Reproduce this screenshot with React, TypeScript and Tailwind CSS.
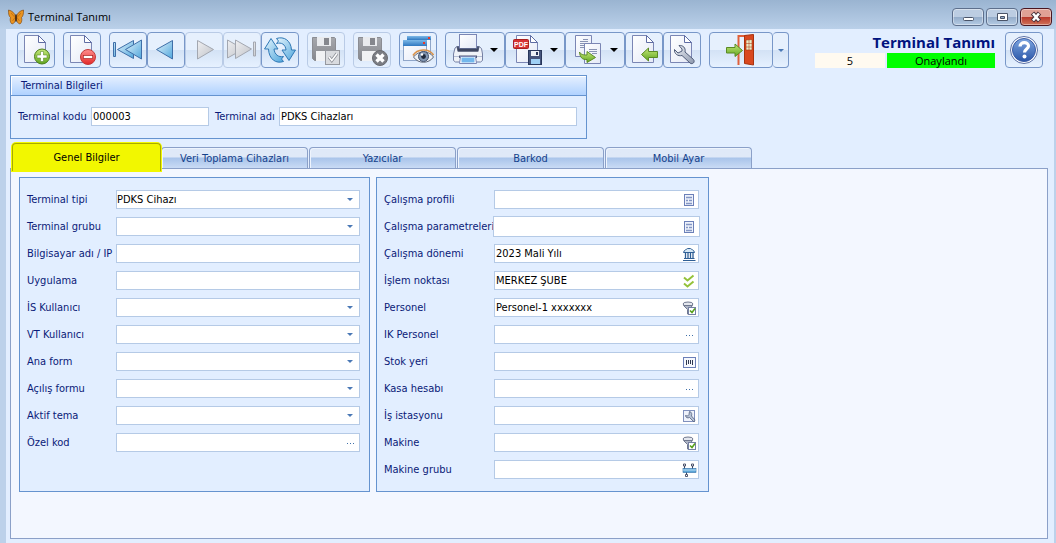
import type { ReactNode } from "react";
import clsx from "clsx";

type FieldKind = "text" | "select" | "dots" | "form" | "bank" | "checks" | "filter" | "barcode" | "wrench" | "group";

type Field = {
  id: string;
  label: string;
  kind: FieldKind;
  value?: string;
  focused?: boolean;
};

const leftFields: Field[] = [
  { id: "terminal-tipi", label: "Terminal tipi", kind: "select", value: "PDKS Cihazı" },
  { id: "terminal-grubu", label: "Terminal grubu", kind: "select" },
  { id: "bilgisayar-adi", label: "Bilgisayar adı / IP", kind: "text" },
  { id: "uygulama", label: "Uygulama", kind: "text" },
  { id: "is-kullanici", label: "İS Kullanıcı", kind: "select" },
  { id: "vt-kullanici", label: "VT Kullanıcı", kind: "select" },
  { id: "ana-form", label: "Ana form", kind: "select" },
  { id: "acilis-formu", label: "Açılış formu", kind: "select" },
  { id: "aktif-tema", label: "Aktif tema", kind: "select" },
  { id: "ozel-kod", label: "Özel kod", kind: "dots" },
];

const rightFields: Field[] = [
  { id: "calisma-profili", label: "Çalışma profili", kind: "form" },
  { id: "calisma-parametreleri", label: "Çalışma parametreleri", kind: "form", focused: true },
  { id: "calisma-donemi", label: "Çalışma dönemi", kind: "bank", value: "2023 Mali Yılı" },
  { id: "islem-noktasi", label: "İşlem noktası", kind: "checks", value: "MERKEZ ŞUBE" },
  { id: "personel", label: "Personel", kind: "filter", value: "Personel-1 xxxxxxx" },
  { id: "ik-personel", label: "IK Personel", kind: "dots" },
  { id: "stok-yeri", label: "Stok yeri", kind: "barcode" },
  { id: "kasa-hesabi", label: "Kasa hesabı", kind: "dots" },
  { id: "is-istasyonu", label: "İş istasyonu", kind: "wrench" },
  { id: "makine", label: "Makine", kind: "filter" },
  { id: "makine-grubu", label: "Makine grubu", kind: "group" },
];

const tabs = ["Genel Bilgiler", "Veri Toplama Cihazları", "Yazıcılar", "Barkod", "Mobil Ayar"];

// gradients shared by the toolbar icons
function IconDefs() {
  return (
    <svg className="absolute h-0 w-0" aria-hidden="true">
      <defs>
        <linearGradient id="g-page" x1="0" y1="0" x2="1" y2="1">
          <stop offset="0" stopColor="#ffffff" />
          <stop offset="1" stopColor="#e4e9f6" />
        </linearGradient>
        <linearGradient id="g-blue" x1="0" y1="0" x2="1" y2="1">
          <stop offset="0" stopColor="#e6f5fd" />
          <stop offset="1" stopColor="#4fa6dc" />
        </linearGradient>
        <linearGradient id="g-grey" x1="0" y1="0" x2="1" y2="1">
          <stop offset="0" stopColor="#f0f0f2" />
          <stop offset="1" stopColor="#bfc2c8" />
        </linearGradient>
        <linearGradient id="g-green" x1="0" y1="0" x2="0" y2="1">
          <stop offset="0" stopColor="#c6e87a" />
          <stop offset="1" stopColor="#5fa51e" />
        </linearGradient>
        <linearGradient id="g-red" x1="0" y1="0" x2="0" y2="1">
          <stop offset="0" stopColor="#ff8f8f" />
          <stop offset="1" stopColor="#e32828" />
        </linearGradient>
        <linearGradient id="g-disk" x1="0" y1="0" x2="0" y2="1">
          <stop offset="0" stopColor="#a6a8ad" />
          <stop offset="1" stopColor="#85878d" />
        </linearGradient>
        <linearGradient id="g-bar" x1="0" y1="0" x2="0" y2="1">
          <stop offset="0" stopColor="#7db9e8" />
          <stop offset="1" stopColor="#2f78c0" />
        </linearGradient>
        <linearGradient id="g-help" x1="0" y1="0" x2="0" y2="1">
          <stop offset="0" stopColor="#7fa6e0" />
          <stop offset="1" stopColor="#2a56a8" />
        </linearGradient>
        <linearGradient id="g-metal" x1="0" y1="0" x2="1" y2="1">
          <stop offset="0" stopColor="#eef1f6" />
          <stop offset="1" stopColor="#8d98ae" />
        </linearGradient>
      </defs>
    </svg>
  );
}

function Icon({ children }: { children: ReactNode }) {
  return (
    <svg className="h-8 w-8 shrink-0" viewBox="0 0 32 32" aria-hidden="true">
      {children}
    </svg>
  );
}

function Page() {
  return (
    <>
      <path d="M4.5 1.5H18.5L25.5 8.5V28.5H4.5Z" fill="url(#g-page)" stroke="#7b86b4" />
      <path d="M18.5 1.5V8.5H25.5Z" fill="#fff" stroke="#5f6ca3" strokeLinejoin="round" />
    </>
  );
}

function NewIcon() {
  return (
    <Icon>
      <Page />
      <circle cx="22" cy="22.5" r="7.5" fill="url(#g-green)" stroke="#4d7f1c" />
      <path d="M20.500 17.500h3v3.500h3.500v3h-3.500v3.500h-3v-3.500h-3.500v-3h3.500Z" fill="#fff" stroke="#4d7f1c" strokeWidth=".5" />
    </Icon>
  );
}

function DeleteIcon() {
  return (
    <Icon>
      <Page />
      <circle cx="22" cy="23" r="7.5" fill="url(#g-red)" stroke="#c23a3a" />
      <rect x="17.3" y="21.4" width="9.4" height="3.2" fill="#fff" stroke="#a82020" strokeWidth=".7" />
    </Icon>
  );
}

function FirstIcon() {
  return (
    <Icon>
      <g fill="url(#g-blue)" stroke="#3f6fa8" strokeLinejoin="round">
        <path d="M1.500 8.500h2v14h-2Z" />
        <path d="M5.500 15.500 21.500 6.500v18Z" />
        <path d="M13.500 15.500 29.500 6v19Z" />
      </g>
    </Icon>
  );
}

function PrevIcon() {
  return (
    <Icon>
      <path d="M6.500 15.500 22.500 6.500v18.500Z" fill="url(#g-blue)" stroke="#3f6fa8" strokeLinejoin="round" />
    </Icon>
  );
}

function NextIcon() {
  return (
    <Icon>
      <path d="M25.500 15.500 9.500 6.500v18.500Z" fill="url(#g-grey)" stroke="#a3a7b0" strokeLinejoin="round" />
    </Icon>
  );
}

function LastIcon() {
  return (
    <Icon>
      <g fill="url(#g-grey)" stroke="#a3a7b0" strokeLinejoin="round">
        <path d="M17.500 15 1.500 6v18Z" />
        <path d="M25.500 15 9.500 6v18.500Z" />
        <path d="M27.500 8h2v14h-2Z" />
      </g>
    </Icon>
  );
}

function RefreshIcon() {
  return (
    <Icon>
      <g fill="url(#g-blue)" stroke="#2f78b5" strokeLinejoin="round">
        <path d="M12.500 4.500C20 2 27 6.500 27.500 16H31.500L25 26.500 18 16h4C21.500 10.500 17.500 8 12.500 9.500L14.500 7Z" />
        <path d="M19.500 27.500C12 30 5 25.500 4.500 15H.5L7 4.500 14 15H10C10.500 20.500 14.500 23.500 19.500 22.500L17.500 25Z" />
      </g>
    </Icon>
  );
}

function GreyDisk() {
  return (
    <>
      <path d="M2.500 3.500H24.500L25.500 4.500V26.500H4.500L2.500 24.500Z" fill="url(#g-disk)" stroke="#8b8d93" />
      <rect x="7" y="3" width="14" height="9" fill="#e9ebee" />
      <rect x="14" y="4" width="5" height="7" fill="#85878d" />
      <rect x="6" y="17" width="16" height="10" fill="#f1f2f4" />
    </>
  );
}

function SaveCheckIcon() {
  return (
    <Icon>
      <GreyDisk />
      <rect x="15.500" y="16.500" width="14" height="14" fill="#d9dbdf" stroke="#95989f" />
      <path d="m19 23 2.800 3.500L27 19.500" fill="none" stroke="#8b8e95" strokeWidth="3" />
      <path d="m19 23 2.800 3.500L27 19.500" fill="none" stroke="#fff" strokeWidth="1.500" />
    </Icon>
  );
}

function SaveCloseIcon() {
  return (
    <Icon>
      <GreyDisk />
      <circle cx="24" cy="24" r="7.500" fill="#7b7d83" stroke="#696b70" />
      <path d="m20.500 20.500 7 7m0-7-7 7" stroke="#fff" strokeWidth="3.400" />
    </Icon>
  );
}

function PreviewIcon() {
  return (
    <Icon>
      <rect x="5.500" y="2.500" width="23" height="18" fill="#f4f8fd" stroke="#8fa6c9" />
      <rect x="5" y="2" width="24" height="4" fill="url(#g-bar)" />
      <rect x="26" y="3" width="2" height="2" fill="#e8392b" />
      <rect x="1.500" y="6.500" width="23" height="20" fill="url(#g-page)" stroke="#8fa6c9" />
      <rect x="1" y="6" width="24" height="6" fill="url(#g-bar)" />
      <rect x="21" y="8" width="2" height="2" fill="#e8392b" />
      <path d="M11.500 23C16 16.500 27 16 31.500 23 27 30 16 30 11.500 23Z" fill="#eef2f7" stroke="#5f6675" />
      <path d="M11 21.500C15 14.500 27 14 31.500 21" fill="none" stroke="#d9924a" strokeWidth="1.600" />
      <circle cx="21.500" cy="22.500" r="5" fill="#8297b3" stroke="#41516c" />
      <circle cx="21.500" cy="22.500" r="2.400" fill="#1f2a3d" />
      <circle cx="20" cy="20.500" r="1.200" fill="#fff" />
    </Icon>
  );
}

function PrintIcon() {
  return (
    <Icon>
      <path d="M3 14 5 12.500H27L29.500 14.500 30.500 20V26.500L28.500 28H3.500L1.500 26.500V20Z" fill="#eff2f8" stroke="#7580a3" />
      <path d="M4.500 12.500H27.500L26.500 17.500H5.500Z" fill="#4d5674" />
      <rect x="7.500" y=".5" width="17" height="14" fill="url(#g-page)" stroke="#7b86b4" />
      <path d="M6 14.500H26V17.500H6Z" fill="#3e4660" />
      <path d="M2 22.500H30" stroke="#b5bed4" />
      <path d="M7 21.500H25V24H7Z" fill="#4d5674" />
      <path d="M8.500 22.500H23.500L24.500 29.500H7.500Z" fill="#fff" stroke="#7b86b4" />
      <path d="M9.500 23.500H22.500V28.500H9.500Z" fill="#72b7ec" />
    </Icon>
  );
}

function PdfIcon() {
  return (
    <Icon>
      <Page />
      <rect x="1.500" y="5.500" width="15" height="9" rx="1" fill="#d63333" stroke="#a81f1f" />
      <text x="9" y="13" textAnchor="middle" fontSize="7" fontWeight="700" fontFamily="Liberation Sans, sans-serif" fill="#fff">
        PDF
      </text>
      <rect x="16.500" y="16.500" width="13" height="14" fill="#46557c" stroke="#28365a" />
      <rect x="19" y="17" width="8" height="5" fill="#edf1f7" />
      <rect x="24" y="18" width="2" height="3" fill="#28365a" />
      <rect x="19" y="25" width="9" height="5" fill="#9fd0f5" />
    </Icon>
  );
}

function CopyIcon() {
  return (
    <Icon>
      <path d="M3.500 1.500H19.500V22.500H3.500Z" fill="url(#g-page)" stroke="#7b86b4" />
      <path d="M11 5.500H16M8 7.500H16M8 9.500H16M8 11.500H12M8 13.500H12" stroke="#8993b3" />
      <path d="M12.500 9.500H28.500V29.500H12.500Z" fill="url(#g-page)" stroke="#7b86b4" />
      <path d="M17 15.500H25M17 17.500H25M20 19.500H25" stroke="#8993b3" />
      <path d="M7.500 18C9 21 12 21 15 21V17.500L23.500 23.500 15 28.500V25.500C10 26 8 23 7.500 18Z" fill="url(#g-green)" stroke="#5a8a24" strokeLinejoin="round" />
    </Icon>
  );
}

function ImportIcon() {
  return (
    <Icon>
      <Page />
      <path d="M13.500 20.500 20.500 14V17.500H29.500V23.500H20.500V27Z" fill="url(#g-green)" stroke="#5a8a24" strokeLinejoin="round" />
    </Icon>
  );
}

function WrenchIcon() {
  return (
    <Icon>
      <Page />
      <path
        d="M13 11.500C17 11 20 14 19 18L27.500 25.500C29.500 28 26.500 31 24 29L16 21.500C12 22.500 8 20 8.500 15.500L12 19 16 17 16 15Z"
        fill="url(#g-metal)"
        stroke="#4f5b78"
        strokeLinejoin="round"
      />
    </Icon>
  );
}

function ExitIcon() {
  return (
    <Icon>
      <path d="M13.500 31V2H22" fill="none" stroke="#e0603a" strokeWidth="2" />
      <path d="M19.500 1.500 28.500.5V31L19.500 29.500Z" fill="#d9481f" stroke="#a8330f" />
      <path d="M21 6 27 5.500V16H21Z" fill="#e9ecc6" stroke="#a8330f" strokeWidth=".6" />
      <path d="M24 5.500V16M21 9.500H27M21 13H27" stroke="#a8330f" strokeWidth=".5" />
      <path d="M1.500 13.500H10V10L17.500 16.500 10 22.500V19H1.500Z" fill="url(#g-green)" stroke="#5a8a24" strokeLinejoin="round" />
    </Icon>
  );
}

function HelpIcon() {
  return (
    <Icon>
      <circle cx="16" cy="16" r="13.500" fill="#fff" stroke="#5a6fa5" />
      <circle cx="16" cy="16" r="11.500" fill="url(#g-help)" stroke="#3a5ba6" />
      <path d="M12 12.500C12 7.500 20.500 7.500 20.500 12 20.500 15 16.500 15 16.500 18.500" fill="none" stroke="#fff" strokeWidth="3.200" />
      <circle cx="16.500" cy="22.500" r="2" fill="#fff" />
    </Icon>
  );
}

function Butterfly() {
  return (
    <svg className="h-4 w-4" viewBox="0 0 16 16" aria-hidden="true">
      <g fill="#ea9420" stroke="#7a420c" strokeWidth=".6" strokeLinejoin="round">
        <path d="M7.500 7.500C7 4.500 4 1.500 .5 1 .2 4.500 1 7.500 2.500 8.500 1.800 10.500 2 13.500 4 15 6.500 14.500 7.500 12 7.500 10Z" />
        <path d="M8.500 7.500C9 4.500 12 1.500 15.500 1 15.800 4.500 15 7.500 13.500 8.500 14.200 10.500 14 13.500 12 15 9.500 14.500 8.500 12 8.500 10Z" />
      </g>
      <path d="M3 4 7 8.500 4.500 12M13 4 9 8.500l2.500 3.500" fill="none" stroke="#b5640f" strokeWidth=".7" />
      <path d="M8 5.500V12.500" stroke="#3a1d05" strokeWidth="1.400" />
    </svg>
  );
}

function Arrow({ className }: { className: string }) {
  return (
    <svg className={className} viewBox="0 0 8 4" aria-hidden="true">
      <path d="M0 0H8L4 4Z" fill="currentColor" />
    </svg>
  );
}

function FieldIcon({ kind }: { kind: FieldKind }) {
  return (
    <svg className="h-4 w-4" viewBox="0 0 16 16" aria-hidden="true">
      {kind === "dots" && <path d="M5 8h1v1H5ZM8 8h1v1H8ZM11 8h1v1h-1Z" fill="#3f6fa8" />}
      {kind === "form" && (
        <>
          <rect x="3.500" y="2.500" width="9" height="11" fill="#eef2fb" stroke="#6c80b8" />
          <path d="M5 5.500h6M5 8.500h2M8 8.500h3M5 11.500h6" stroke="#8496c4" strokeWidth="1.500" />
        </>
      )}
      {kind === "bank" && (
        <>
          <path d="M2.500 6.500C3 3.500 6 3.500 6.500 2.500H9.500C10 3.500 13 3.500 13.500 6.500Z" fill="#d7e8f5" stroke="#2f5f95" />
          <path d="M4.500 7v6M7 7v6M9.500 7v6M12 7v6" stroke="#2f5f95" strokeWidth="1.300" />
          <path d="M3 12.500H13.500M2 14.500H14.500" stroke="#2f5f95" />
        </>
      )}
      {kind === "checks" && (
        <path d="m3 4.500 3.500 3L12.500 2.500M3 10.500l3.500 3L12.500 8.500" fill="none" stroke="#94c23a" strokeWidth="2" />
      )}
      {kind === "filter" && (
        <>
          <ellipse cx="7" cy="4" rx="5" ry="2" fill="#e4e7ee" stroke="#70788f" />
          <path d="M2.500 5.500 6.500 9.500V14H8V9.500L11.500 5.500Z" fill="#aeb5c5" stroke="#70788f" />
          <rect x="7.500" y="7.500" width="7" height="7" fill="#fff" stroke="#7580a3" />
          <path d="m9 10.500 2 2 3-4" fill="none" stroke="#57a01c" strokeWidth="1.600" />
        </>
      )}
      {kind === "barcode" && (
        <>
          <rect x="2.500" y="3.500" width="12" height="10" fill="#f6f8fd" stroke="#6c80b8" />
          <path d="M5.500 6v5M7.500 6v4M9.500 6v4M11.500 6v5" stroke="#2f3850" />
        </>
      )}
      {kind === "wrench" && (
        <>
          <rect x="2.500" y="2.500" width="11" height="11" fill="#eef2fb" stroke="#8090bd" />
          <path d="M8.500 3.500C11 4 11 6.500 10.500 8L14 12 13 14 8.500 9.500C6.500 10.500 4.500 9.500 4.500 7.500L6.500 8 8 6.500Z" fill="#b4c0d4" stroke="#56627f" strokeWidth=".8" />
        </>
      )}
      {kind === "group" && (
        <>
          <path d="M3.500 3V7M11.500 3V7M5.500 10V14" stroke="#3d4560" />
          <rect x="2" y="6.500" width="13" height="4" fill="#5ca6d8" stroke="#2f6ea8" strokeWidth=".6" />
          <path d="M2 8H15" stroke="#bfe0f5" />
          <path d="M2.500 2h2v2h-2ZM10.500 2h2v2h-2ZM4.500 12.500h2v2h-2Z" fill="#fff" stroke="#3d4560" strokeWidth=".9" />
        </>
      )}
    </svg>
  );
}

const toolButton =
  "flex h-9 items-center justify-center rounded-sm border bg-linear-to-b from-[#e6f0fd] from-50% via-[#d3e2f5] via-50% to-[#e6f1ff]";

function ToolButton({
  label,
  children,
  wide,
  disabled,
}: {
  label: string;
  children: ReactNode;
  wide?: boolean;
  disabled?: boolean;
}) {
  return (
    <button
      type="button"
      aria-label={label}
      disabled={disabled}
      className={clsx(toolButton, wide ? "w-[60px] gap-1.5" : "w-[38px]", disabled ? "border-[#b9cbe6]" : "border-[#7897c8]")}
    >
      {children}
      {wide && <Arrow className="h-1 w-2 text-black" />}
    </button>
  );
}

function WindowButton({ label, close, children }: { label: string; close?: boolean; children: ReactNode }) {
  return (
    <button
      type="button"
      aria-label={label}
      className={clsx(
        "flex h-[18px] w-8 items-center justify-center rounded-sm border shadow-[inset_0_0_0_1px_rgba(255,255,255,0.4)] bg-linear-to-b from-50% via-50%",
        close
          ? "border-[#4a1620] from-[#e0a195] via-[#b8372a] to-[#cf7158]"
          : "border-[#5d6f8c] from-[#bccde2] via-[#94acc9] to-[#b4cbe4]",
      )}
    >
      <svg className="h-3 w-4" viewBox="0 0 16 12" aria-hidden="true">
        {children}
      </svg>
    </button>
  );
}

function FieldRow({ field }: { field: Field }) {
  const { id, label, kind, value, focused } = field;

  return (
    <>
      <label htmlFor={id} className="whitespace-nowrap">
        {label}
      </label>
      <div className={clsx("flex h-[19px] min-w-0 items-center border bg-white", focused ? "border-white ring-1 ring-[#b5cae6]" : "border-[#b5cae6]")}>
        {kind === "select" ? (
          <div className="relative h-full w-full">
            <select id={id} defaultValue={value ?? ""} className="block h-full w-full appearance-none bg-transparent text-black outline-none">
              <option value={value ?? ""}>{value ?? ""}</option>
            </select>
            <Arrow className="pointer-events-none absolute right-1.5 top-[7px] h-[3px] w-1.5 text-[#4a78b5]" />
          </div>
        ) : (
          <>
            <input id={id} type="text" defaultValue={value ?? ""} className="h-full min-w-0 flex-1 bg-transparent pl-px text-black outline-none" />
            {kind !== "text" && (
              <button type="button" aria-label={`${label} seç`} className="mr-px">
                <FieldIcon kind={kind} />
              </button>
            )}
          </>
        )}
      </div>
    </>
  );
}

export default function App() {
  return (
    <div className="flex min-h-screen flex-col bg-[#bcd1ea] font-['DejaVu_Sans_Condensed','DejaVu_Sans',sans-serif] text-[11px] leading-4 text-[#0a1a78]">
      <IconDefs />

      <header className="flex h-[29px] items-center bg-linear-to-b from-[#9ab4d1] to-[#bad0e9] pl-2 pr-1 pt-1">
        <Butterfly />
        <span className="ml-1 flex-1 font-['Open_Sans',sans-serif] text-[11px] text-black">Terminal Tanımı</span>
        <div className="flex gap-0.5">
          <WindowButton label="Simge durumuna küçült">
            <rect x="3.500" y="6.500" width="10" height="3" rx="1" fill="#fff" stroke="#4a5468" />
          </WindowButton>
          <WindowButton label="Ekranı kapla">
            <path d="M3.500 2.500H13.500V9.500H3.500ZM6.500 5.500H10.500V7.500H6.500Z" fill="#fff" fillRule="evenodd" stroke="#4a5468" />
          </WindowButton>
          <WindowButton label="Kapat" close>
            <path d="m4.500 2 7 8m0-8-7 8" stroke="#4a3038" strokeWidth="4.500" />
            <path d="m5 2.500 6 7m0-7-6 7" stroke="#fff" strokeWidth="2.600" />
          </WindowButton>
        </div>
      </header>

      <main className="ml-1.5 mr-0.5 flex flex-1 flex-col bg-[#e2eeff] pb-1 pl-1 pr-1.5">
        <div className="flex items-start pl-[7px] pr-[5px] pt-[3px]">
          <div className="flex gap-2">
            <ToolButton label="Yeni"><NewIcon /></ToolButton>
            <ToolButton label="Sil"><DeleteIcon /></ToolButton>
            <div className="flex">
              <ToolButton label="İlk kayıt"><FirstIcon /></ToolButton>
              <ToolButton label="Önceki kayıt"><PrevIcon /></ToolButton>
              <ToolButton label="Sonraki kayıt" disabled><NextIcon /></ToolButton>
              <ToolButton label="Son kayıt" disabled><LastIcon /></ToolButton>
              <ToolButton label="Yenile"><RefreshIcon /></ToolButton>
            </div>
            <ToolButton label="Kaydet" disabled><SaveCheckIcon /></ToolButton>
            <ToolButton label="Vazgeç" disabled><SaveCloseIcon /></ToolButton>
            <ToolButton label="Önizleme"><PreviewIcon /></ToolButton>
            <div className="flex">
              <ToolButton label="Yazdır" wide><PrintIcon /></ToolButton>
              <ToolButton label="PDF kaydet" wide><PdfIcon /></ToolButton>
              <ToolButton label="Kopyala" wide><CopyIcon /></ToolButton>
              <ToolButton label="İçe aktar"><ImportIcon /></ToolButton>
              <ToolButton label="Ayarlar"><WrenchIcon /></ToolButton>
            </div>
            <div className="flex">
              <button type="button" aria-label="Çıkış" className={clsx(toolButton, "w-16 border-[#7897c8]")}>
                <ExitIcon />
              </button>
              <button type="button" aria-label="Çıkış seçenekleri" className={clsx(toolButton, "w-4 border-l-0 border-[#7897c8]")}>
                <Arrow className="h-[3px] w-1.5 text-[#4a78b5]" />
              </button>
            </div>
          </div>

          <div className="ml-auto w-[180px] font-['Open_Sans',sans-serif]">
            <h1 className="text-right text-[15px] font-bold leading-[21px] text-[#00137f]">Terminal Tanımı</h1>
            <div className="flex gap-0.5 text-center text-[11px] leading-[15px] text-black">
              <span className="w-[70px] bg-[#fffaf0]">5</span>
              <span className="flex-1 bg-[#00ff00]">Onaylandı</span>
            </div>
          </div>
          <button type="button" aria-label="Yardım" className={clsx(toolButton, "ml-2.5 w-[38px] border-[#7897c8]")}>
            <HelpIcon />
          </button>
        </div>

        <section className="mt-[7px] w-[577px] border border-[#6593cf]">
          <h2 className="h-5 border-b border-[#6593cf] bg-linear-to-b from-[#e6f0ff] to-[#b0d2ff] pl-2.5 leading-[19px] shadow-[inset_1px_1px_0_#fff]">
            Terminal Bilgileri
          </h2>
          <div className="flex items-center pb-3 pl-[7px] pr-[9px] pt-[11px]">
            <label htmlFor="terminal-kodu" className="w-[73px] whitespace-nowrap">Terminal kodu</label>
            <input id="terminal-kodu" type="text" defaultValue="000003" className="h-[19px] w-[118px] border border-[#b5cae6] bg-white pl-px text-black outline-none" />
            <label htmlFor="terminal-adi" className="ml-1.5 w-16 whitespace-nowrap">Terminal adı</label>
            <input id="terminal-adi" type="text" defaultValue="PDKS Cihazları" className="h-[19px] min-w-0 flex-1 border border-[#b5cae6] bg-white pl-px text-black outline-none" />
          </div>
        </section>

        <div role="tablist" className="mt-1 flex items-end pl-0.5">
          {tabs.map((tab, index) => (
            <button
              key={tab}
              type="button"
              role="tab"
              aria-selected={index === 0}
              className={clsx(
                "rounded-t-sm border border-b-0",
                index === 0
                  ? "z-10 -mb-[3px] h-7 w-[149px] border-[#a8ab00] bg-[#f2f700] text-black ring-1 ring-[#f2f700]"
                  : "mr-px h-[21px] w-[147px] border-[#8ba0c8] bg-linear-to-b from-[#dfe9f8] from-45% via-[#a9c4ea] via-50% to-[#c9dbf5] pt-px text-[#15428b] shadow-[inset_1px_1px_0_#eef4fd]",
              )}
            >
              {tab}
            </button>
          ))}
        </div>

        <div role="tabpanel" className="flex flex-1 items-start gap-1.5 border border-[#8ba0c8] bg-[#f3f7ff] p-2">
          <section className="grid min-h-[315px] w-[351px] grid-cols-[89px_1fr] content-start items-center gap-y-2 border border-[#6593cf] bg-[#e2eeff] py-3 pl-[7px] pr-[9px]">
            {leftFields.map(field => (
              <FieldRow key={field.id} field={field} />
            ))}
          </section>
          <section className="grid w-[333px] grid-cols-[110px_1fr] items-center gap-y-2 border border-[#6593cf] bg-[#e2eeff] py-3 pl-[7px] pr-[9px]">
            {rightFields.map(field => (
              <FieldRow key={field.id} field={field} />
            ))}
          </section>
        </div>
      </main>
    </div>
  );
}
